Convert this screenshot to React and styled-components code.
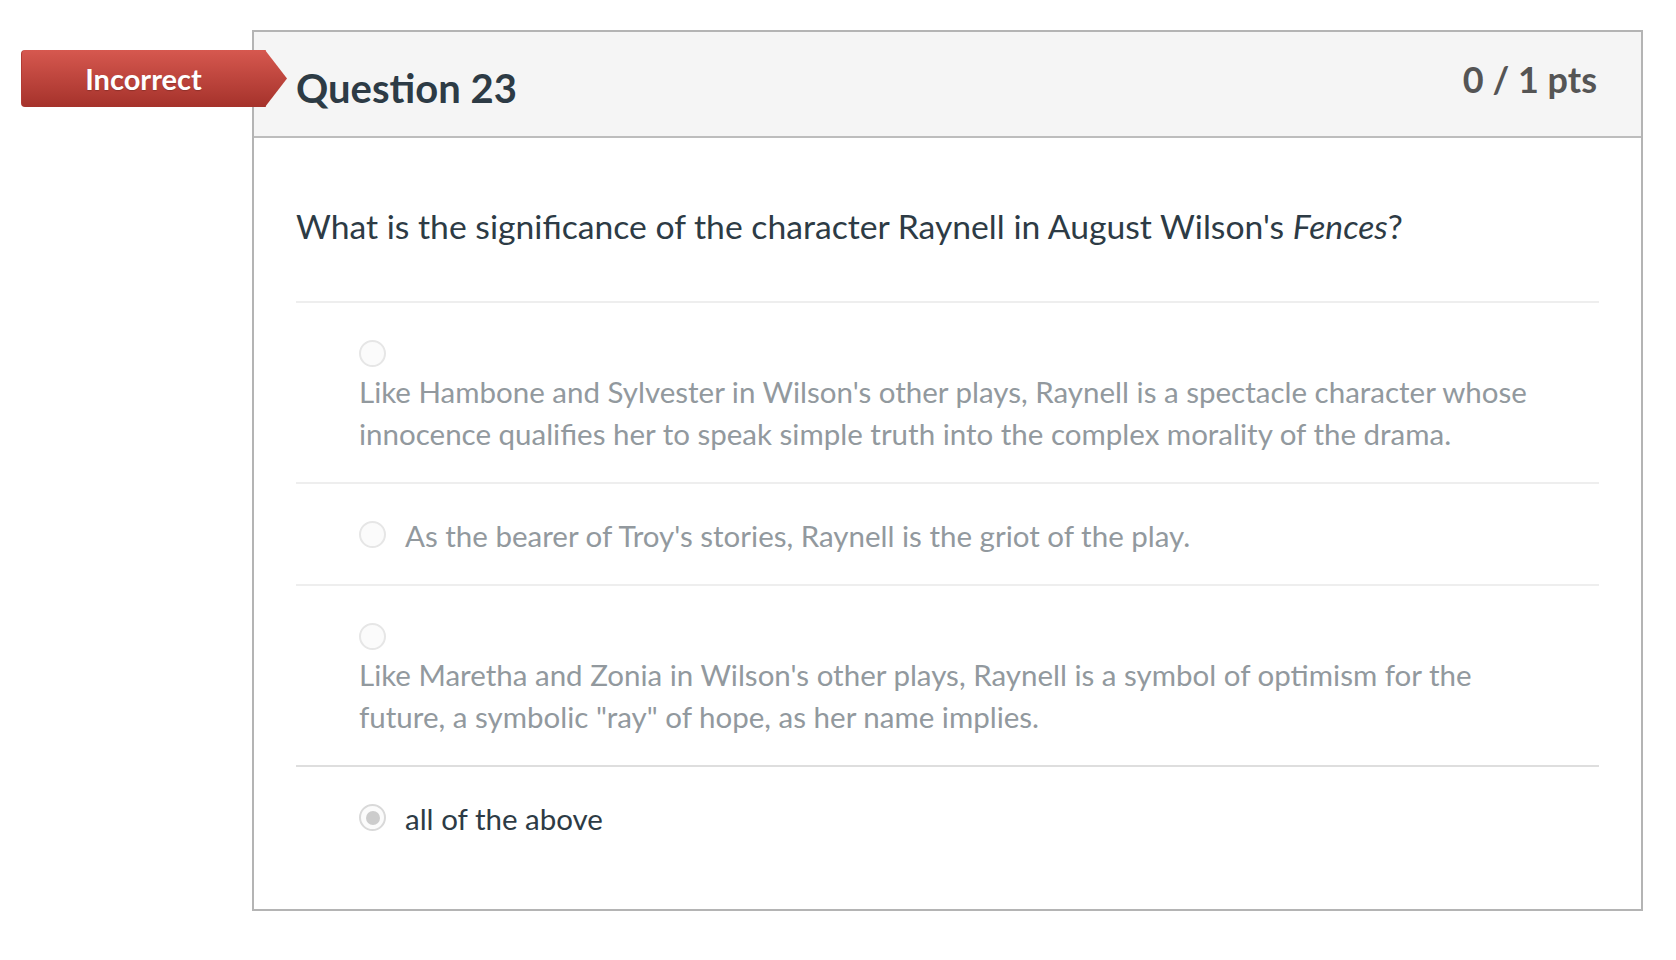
import React from "react";
import styled, { createGlobalStyle } from "styled-components";

const GlobalStyle = createGlobalStyle`
  html, body {
    margin: 0;
    padding: 0;
    background: #ffffff;
  }
  body {
    font-family: Lato, "Noto Sans", "Liberation Sans", sans-serif;
    color: #2d3b45;
  }
`;

const Page = styled.div`
  position: relative;
  padding: 30px 33px 48px 252px;
`;

const Badge = styled.div`
  position: absolute;
  left: 21px;
  top: 50px;
  width: 245px;
  height: 57px;
  display: flex;
  align-items: center;
  justify-content: center;
  box-sizing: border-box;
  border-radius: 4px 0 0 4px;
  border-left: 1px solid #b23c34;
  border-right: 1px solid rgba(255, 255, 255, 0.25);
  background: linear-gradient(#d6584f, #a5322b);
  color: #ffffff;
  font-size: 29px;
  font-weight: 700;
  text-shadow: 0 1px 1px rgba(0, 0, 0, 0.2);
  z-index: 2;

  &::after {
    content: "";
    position: absolute;
    left: 100%;
    top: 0;
    width: 22px;
    height: 100%;
    background: linear-gradient(#d6584f, #a5322b);
    clip-path: polygon(0 0, 100% 50%, 0 100%);
  }
`;

const Card = styled.div`
  border: 2px solid #b4b4b4;
  background: #ffffff;
`;

const Header = styled.div`
  display: flex;
  justify-content: space-between;
  align-items: flex-start;
  height: 104px;
  padding: 0 44px 0 42px;
  background: #f5f5f5;
  border-bottom: 2px solid #bdbdbd;
`;

const Title = styled.h2`
  margin: 32px 0 0;
  font-size: 40px;
  line-height: 48px;
  font-weight: 700;
  color: #2d3b45;
`;

const Points = styled.div`
  margin-top: 26px;
  font-size: 36px;
  line-height: 43px;
  font-weight: 700;
  color: #555555;
`;

const Body = styled.div`
  padding: 64px 42px 42px;
`;

const QuestionText = styled.p`
  margin: 0;
  padding-bottom: 51px;
  border-bottom: 2px solid #eeeeee;
  font-size: 33.7px;
  line-height: 48px;
  color: #2d3b45;
`;

const AnswerRow = styled.div`
  padding: 31px 52px 27px 63px;
  font-size: 29.5px;
  line-height: 37px;
  border-bottom: ${({ $last, $strong }) =>
    $last ? "none" : `2px solid ${$strong ? "#dedede" : "#eeeeee"}`};
`;

const Radio = styled.span`
  position: relative;
  display: inline-block;
  vertical-align: top;
  box-sizing: border-box;
  width: 27px;
  height: 27px;
  margin: 6px 19px 0 0;
  border-radius: 50%;
  border: 2px solid ${({ $checked }) => ($checked ? "#d9d9d9" : "#e6e6e6")};
  background: #fbfbfb;

  &::after {
    content: "";
    display: ${({ $checked }) => ($checked ? "block" : "none")};
    position: absolute;
    left: 50%;
    top: 50%;
    width: 14px;
    height: 14px;
    transform: translate(-50%, -50%);
    border-radius: 50%;
    background: #cccccc;
  }
`;

const AnswerLabel = styled.span`
  display: inline-block;
  vertical-align: top;
  line-height: 42px;
  color: ${({ $selected }) => ($selected ? "#2d3b45" : "#92999e")};
`;

const answers = [
  {
    text: "Like Hambone and Sylvester in Wilson's other plays, Raynell is a spectacle character whose innocence qualifies her to speak simple truth into the complex morality of the drama.",
  },
  { text: "As the bearer of Troy's stories, Raynell is the griot of the play." },
  {
    text: 'Like Maretha and Zonia in Wilson\'s other plays, Raynell is a symbol of optimism for the future, a symbolic "ray" of hope, as her name implies.',
  },
  { text: "all of the above", selected: true },
];

const App = () => {
  return (
    <React.Fragment>
      <GlobalStyle />
      <Page>
        <Badge>Incorrect</Badge>
        <Card>
          <Header>
            <Title>Question 23</Title>
            <Points>0 / 1 pts</Points>
          </Header>
          <Body>
            <QuestionText>
              What is the significance of the character Raynell in August
              Wilson's <em>Fences</em>?
            </QuestionText>
            {answers.map((a, i) => (
              <AnswerRow
                key={i}
                $last={i === answers.length - 1}
                $strong={i === answers.length - 2}
              >
                <Radio $checked={a.selected} />
                <AnswerLabel $selected={a.selected}>{a.text}</AnswerLabel>
              </AnswerRow>
            ))}
          </Body>
        </Card>
      </Page>
    </React.Fragment>
  );
};

export default App;
